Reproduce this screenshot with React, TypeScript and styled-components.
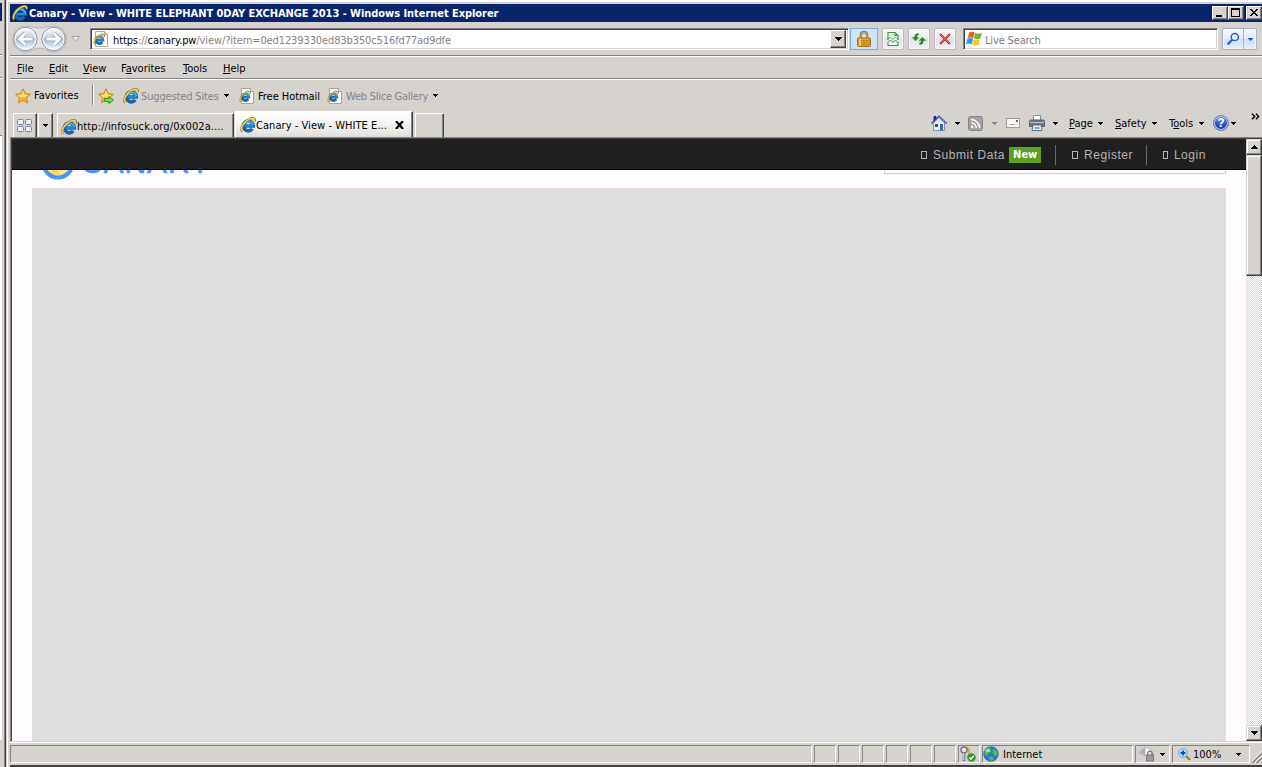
import React from "react";
import styled, { createGlobalStyle, css } from "styled-components";

const face = "#d6d3ce";
const shade = "#848284";
const dark = "#424142";

const Global = createGlobalStyle`
  *, *::before, *::after { box-sizing: border-box; }
  body { margin: 0; overflow: hidden; background: ${face}; }
`;

const Desktop = styled.div`
  display: flex;
  width: 1262px;
  height: 767px;
  background: ${face};
  font: 11px/13px "DejaVu Sans Condensed", "DejaVu Sans", sans-serif;
  color: #000;
  overflow: hidden;
`;

/* Edge of the window behind the browser */
const BackWindow = styled.div`
  display: flex;
  flex-direction: column;
  flex: none;
  width: 5px;
  border-right: 1px solid ${shade};
`;
const BackTitle = styled.div`
  width: 2px;
  height: 18px;
  margin-top: 3px;
  background: #08246b;
`;
const BackRule = styled.div<{ $top: number }>`
  width: 2px;
  height: 2px;
  margin-top: ${(p) => p.$top}px;
  background: ${shade};
  border-bottom: 1px solid #fff;
`;
const BackPage = styled.div`
  width: 2px;
  height: 605px;
  margin-top: 56px;
  background: #fff;
  border-top: 1px solid ${shade};
`;

const Window = styled.div`
  display: flex;
  flex-direction: column;
  flex: 1;
  min-width: 0;
  border-left: 1px solid ${dark};
  box-shadow: inset 1px 0 ${face}, inset 2px 0 #fff, inset 0 2px #fff, inset 0 1px ${face};
  padding: 4px 0 0 4px;
`;

const Label = styled.span<{ $w?: number; $c?: string; $ls?: number; $ml?: number }>`
  display: block;
  flex: none;
  width: ${(p) => (p.$w ? `${p.$w}px` : "auto")};
  margin-left: ${(p) => p.$ml ?? 0}px;
  color: ${(p) => p.$c ?? "#000"};
  letter-spacing: ${(p) => p.$ls ?? 0}px;
  white-space: pre;
  u { text-decoration-thickness: 1px; text-underline-offset: 1px; }
`;
const Muted = styled.span`
  color: #848284;
`;

const TitleBar = styled.div`
  display: flex;
  align-items: center;
  flex: none;
  height: 18px;
  padding-left: 2px;
  background: #08246b;
`;
const TitleText = styled(Label)`
  flex: 1;
  padding-left: 1px;
  font-weight: bold;
`;

const raised = css`
  background: ${face};
  border: 1px solid;
  border-color: #fff ${dark} ${dark} #fff;
  box-shadow: inset -1px -1px ${shade}, inset 1px 1px ${face};
`;
const CaptionButton = styled.div<{ $gap?: number }>`
  ${raised}
  display: flex;
  width: 16px;
  height: 14px;
  margin-left: ${(p) => p.$gap ?? 0}px;
`;

const NavRow = styled.div`
  display: flex;
  align-items: center;
  flex: none;
  height: 35px;
  padding: 0 5px 0 2px;
  border-bottom: 1px solid #fff;
  box-shadow: inset 0 -1px ${shade};
`;
const Field = styled.div<{ $w: number; $ml: number }>`
  display: flex;
  align-items: center;
  flex: none;
  width: ${(p) => p.$w}px;
  height: 22px;
  margin-left: ${(p) => p.$ml}px;
  background: #fff;
  border: 1px solid;
  border-color: ${shade} #fff #fff ${shade};
  box-shadow: inset 1px 1px ${dark}, inset -1px -1px ${face};
  padding: 0 2px;
`;
const FieldText = styled(Label)`
  padding-top: 2px;
`;
const DropButton = styled.div`
  ${raised}
  display: flex;
  align-items: center;
  justify-content: center;
  width: 16px;
  height: 18px;
  margin-left: auto;
`;
const LockButton = styled.div`
  display: flex;
  align-items: center;
  justify-content: center;
  width: 30px;
  height: 22px;
  margin-left: 1px;
  background: #cee3ff;
  border: 1px solid #84aad6;
`;
const ToolButton = styled.div<{ $ml: number; $w?: number }>`
  display: flex;
  align-items: center;
  justify-content: center;
  flex: none;
  width: ${(p) => p.$w ?? 22}px;
  height: 22px;
  margin-left: ${(p) => p.$ml}px;
  border: 1px solid #b9bac2;
  border-radius: 2px;
  background: linear-gradient(#f7f7f7, #ececf0 45%, #dfe0ea 50%, #eff0f7);
  box-shadow: inset 0 0 0 1px #f7f7fa;
`;
const SearchButton = styled(ToolButton)`
  border-color: #a5aecb;
  background: linear-gradient(#f4f7ff, #e4ebfb 48%, #d3def6 52%, #e7eefc);
`;
const SplitLine = styled.div`
  width: 1px;
  height: 20px;
  margin: 0 4px 0 3px;
  background: #a5aecb;
`;

const MenuRow = styled.div`
  display: flex;
  align-items: center;
  flex: none;
  height: 23px;
  padding: 1px 0 0 7px;
  border-bottom: 1px solid #fff;
  box-shadow: inset 0 -1px ${shade};
`;
const FavoritesRow = styled.div`
  display: flex;
  align-items: center;
  flex: none;
  height: 31px;
  padding-left: 5px;
`;
const LinkText = styled(Label)`
  padding-top: 1px;
`;
const VRule = styled.div`
  width: 2px;
  height: 20px;
  margin: -2px 4px 0 0;
  background: ${shade};
  border-right: 1px solid #fff;
`;

const TabRow = styled.div`
  display: flex;
  align-items: flex-end;
  flex: none;
  height: 26px;
  padding-left: 3px;
`;
const Tab = styled.div<{ $w: number; $h: number; $ml?: number; $active?: boolean }>`
  display: flex;
  align-items: center;
  flex: none;
  width: ${(p) => p.$w}px;
  height: ${(p) => p.$h}px;
  margin-left: ${(p) => p.$ml ?? 0}px;
  border: solid;
  border-width: 1px 1px 0;
  border-color: #fff ${dark} transparent #fff;
  box-shadow: inset -1px 0 ${shade};
  background: ${(p) => (p.$active ? "linear-gradient(#fff, #f7f6f5 40%, #e0deda)" : face)};
  padding: ${(p) => (p.$active ? "1px 0 0 4px" : "2px 0 0 3px")};
`;
const IconTab = styled(Tab)`
  justify-content: center;
  padding: 0 1px 0 0;
`;
const CommandBar = styled.div`
  display: flex;
  align-items: center;
  align-self: flex-start;
  height: 24px;
  margin-left: auto;
`;

const Viewport = styled.div`
  display: flex;
  flex: none;
  height: 605px;
  border-top: 1px solid ${shade};
  border-left: 1px solid ${shade};
  border-bottom: 1px solid ${face};
  box-shadow: inset 1px 1px ${dark};
  padding: 1px 0 0 1px;
`;
const Page = styled.main`
  display: flex;
  flex-direction: column;
  flex: 1;
  background: #fffbff;
`;
const SiteBar = styled.nav`
  display: flex;
  align-items: center;
  justify-content: flex-end;
  flex: none;
  height: 31px;
  padding: 1px 40px 0 0;
  background: #212021;
  border-bottom: 1px solid #000;
  color: #b5b2b5;
  font: 12px/16px "Liberation Sans", Arial, sans-serif;
  letter-spacing: 0.55px;
`;
const SiteLink = styled.span<{ $w: number }>`
  display: flex;
  align-items: center;
  width: ${(p) => p.$w}px;
  white-space: nowrap;
`;
const MissingGlyph = styled.i`
  width: 6px;
  height: 8px;
  margin-right: 6px;
  border: 1px solid #b5b2b5;
`;
const NewBadge = styled.b`
  height: 16px;
  margin-left: 4px;
  padding: 0 4px;
  background: #5aa221;
  color: #fff;
  font: bold 11px/16px "DejaVu Sans Condensed", sans-serif;
  letter-spacing: 0;
`;
const SiteDivider = styled.i<{ $mr: number }>`
  width: 1px;
  height: 20px;
  margin-right: ${(p) => p.$mr}px;
  background: #6b696b;
`;
const Masthead = styled.header`
  display: flex;
  align-items: flex-start;
  flex: none;
  height: 18px;
  padding: 0 20px 0 29px;
  overflow: hidden;
`;
const LogoText = styled.span`
  margin: -22px 0 0 6px;
  color: #4296f7;
  font: 30px/30px "Liberation Sans", Arial, sans-serif;
  letter-spacing: 0.9px;
  -webkit-text-stroke: 0.6px #4296f7;
`;
const SearchBoxEdge = styled.div`
  width: 342px;
  height: 4px;
  margin-left: auto;
  border: 1px solid #ceccce;
  border-top: 0;
  background: #fff;
`;
const GreyPanel = styled.section`
  flex: 1;
  margin: 0 20px;
  background: #dedfde;
`;

const ScrollTrack = styled.div`
  display: flex;
  flex-direction: column;
  flex: none;
  width: 16px;
  background: repeating-conic-gradient(#fff 0 25%, ${face} 0 50%) 0 0 / 2px 2px;
`;
const ScrollPart = styled.div<{ $h: number; $end?: boolean }>`
  ${raised}
  display: flex;
  align-items: center;
  justify-content: center;
  flex: none;
  height: ${(p) => p.$h}px;
  margin-top: ${(p) => (p.$end ? "auto" : "0")};
  border-color: ${face} ${dark} ${dark} ${face};
  box-shadow: inset -1px -1px ${shade}, inset 1px 1px #fff;
`;

const StatusBar = styled.footer`
  display: flex;
  flex: none;
  height: 25px;
  padding: 2px 0 3px;
  border-top: 1px solid #fff;
  border-bottom: 2px solid ${dark};
`;
const StatusCell = styled.div<{ $w: number; $pl?: number }>`
  display: flex;
  align-items: center;
  flex: none;
  width: ${(p) => p.$w}px;
  height: 18px;
  margin-right: 2px;
  border: 1px solid;
  border-color: ${shade} #fff #fff ${shade};
  padding-left: ${(p) => p.$pl ?? 0}px;
`;

const Glyph = styled.svg<{ $ml?: number; $mr?: number; $up?: number }>`
  display: block;
  flex: none;
  margin-left: ${(p) => p.$ml ?? 0}px;
  margin-right: ${(p) => p.$mr ?? 0}px;
  margin-bottom: ${(p) => p.$up ?? 0}px;
`;
const LogoRing = styled(Glyph)`
  margin-top: -24px;
`;
type G = { ml?: number; mr?: number };

const Arrow = ({ ml, mr, c = "#000", up, w = 5 }: G & { c?: string; up?: boolean; w?: number }) => {
  const h = Math.ceil(w / 2);
  return (
    <Glyph $ml={ml} $mr={mr} width={w} height={h} viewBox={`0 0 ${w} ${h}`} shapeRendering="crispEdges">
      {Array.from({ length: h }, (_, i) => (
        <rect key={i} x={i} y={up ? h - 1 - i : i} width={w - 2 * i} height="1" fill={c} />
      ))}
    </Glyph>
  );
};

const EShape = () => (
  <>
    <path d="M4 9H13.2A4.9 4.9 0 1 0 12.2 11.9" fill="none" stroke="#1665b0" strokeWidth="3.7" />
    <path d="M3.8 7.4A4.9 4.9 0 0 1 13.2 8.2" fill="none" stroke="#3fb0ee" strokeWidth="2" />
    <path d="M5 9H13.8" stroke="#2b8fd8" strokeWidth="1.6" />
    <path d="M2.2 14.6C-.6 11.8 3.6 5.2 8.6 2.4C12 .5 15.6.4 14.8 4.4" fill="none" stroke="#a97a14" strokeWidth="2.2" />
    <path d="M2 14C0 11.2 3.8 5.2 8.6 2.5C11.8.9 14.9.6 14.3 3.8" fill="none" stroke="#ffd84e" strokeWidth="1.3" />
  </>
);
const IEIcon = ({ ml, mr }: G) => (
  <Glyph $ml={ml} $mr={mr} width="16" height="16" viewBox="0 0 16 16"><EShape /></Glyph>
);
const IEPage = ({ ml, mr }: G) => (
  <Glyph $ml={ml} $mr={mr} width="16" height="16" viewBox="0 0 16 16">
    <path d="M2.5 .5H11.5L14.5 3.5V15.5H2.5Z" fill="#fff" stroke="#a5a6ad" />
    <path d="M11.5 .5V3.5H14.5" fill="#e7e7ef" stroke="#a5a6ad" />
    <g transform="translate(.4 2.6) scale(.72)"><EShape /></g>
  </Glyph>
);
const starPath = "M8 .8L10.2 5.6L15.4 6.2L11.5 9.7L12.6 14.9L8 12.2L3.4 14.9L4.5 9.7L.6 6.2L5.8 5.6Z";
const Star = ({ add }: { add?: boolean }) => (
  <Glyph $mr={add ? 9 : 3} width="16" height="16" viewBox="0 0 16 16">
    <path d={starPath} fill="#ffb31f" stroke="#cf7d0a" strokeWidth=".9" />
    <path d="M8 2.5L9.6 6.4L13.4 7L10.6 9.2L8 8.8L5 9.4L2.8 7L6.4 6.4Z" fill="#ffe27a" />
    {add && <path d="M6.5 10.6H10.8V8.6L15.5 12L10.8 15.4V13.4H6.5Z" fill="#7be352" stroke="#189218" strokeWidth=".9" />}
  </Glyph>
);

const BackForward = () => (
  <Glyph width="56" height="28" viewBox="0 0 56 28">
    <defs>
      <linearGradient id="orb" x1="0" y1="0" x2="0" y2="1">
        <stop offset="0" stopColor="#fafbfd" />
        <stop offset=".42" stopColor="#ccd3df" />
        <stop offset=".52" stopColor="#acb8ca" />
        <stop offset=".8" stopColor="#d5e4f1" />
        <stop offset="1" stopColor="#f4fbff" />
      </linearGradient>
    </defs>
    <path d="M13.5 1C19 1 22 3 27.5 3S36 1 41.5 1A13 13 0 0 1 41.5 27C36 27 33 23 27.5 23S19 27 13.5 27A13 13 0 0 1 13.5 1Z" fill="#e4e3e3" stroke="#b5b4b5" />
    {[13.5, 41.5].map((x) => (
      <g key={x}>
        <circle cx={x} cy="14" r="11.6" fill="url(#orb)" stroke="#808a9a" />
        <circle cx={x} cy="14" r="10.4" fill="none" stroke="#fff" strokeWidth="1.4" opacity=".75" />
      </g>
    ))}
    <path d="M20.5 14H8M13 8.5L7.5 14L13 19.5" fill="none" stroke="#8e9bb0" strokeWidth="4.2" />
    <path d="M20.5 14H8M13 8.5L7.5 14L13 19.5" fill="none" stroke="#fff" strokeWidth="2.8" />
    <path d="M34.5 14H47M42 8.5L47.5 14L42 19.5" fill="none" stroke="#8e9bb0" strokeWidth="4.2" />
    <path d="M34.5 14H47M42 8.5L47.5 14L42 19.5" fill="none" stroke="#fff" strokeWidth="2.8" />
  </Glyph>
);
const Padlock = () => (
  <Glyph width="14" height="16" viewBox="0 0 14 16">
    <path d="M3.8 8V4.5Q3.8 1.3 7 1.3T10.2 4.5V8" fill="none" stroke="#8c6d31" strokeWidth="2.4" />
    <path d="M3.8 8V4.5Q3.8 1.3 7 1.3T10.2 4.5V8" fill="none" stroke="#dec78c" strokeWidth=".9" />
    <rect x=".5" y="7" width="13" height="8.5" rx=".8" fill="#e7a629" stroke="#a56d10" />
    <path d="M1 9.5H13M1 11.5H13M1 13.5H13" stroke="#bd7d18" strokeWidth=".9" />
    <path d="M3 8V15" stroke="#ffdb73" strokeWidth="1.5" />
  </Glyph>
);
const BrokenPage = () => (
  <Glyph width="14" height="16" viewBox="0 0 14 16" fill="none" stroke="#319a39">
    <path d="M2 9V1.5H9L12 4.5V9M9 1.5V4.5H12M2 12V14.5H12V12" fill="#f7fff7" strokeWidth="1.1" />
    <path d="M1.5 8.5L4.5 6L7 8.5L9.5 6L12.5 9M1.5 11.5L4.5 9L7 11.5L9.5 9L12.5 12" strokeWidth=".9" />
  </Glyph>
);
const Refresh = () => (
  <Glyph width="16" height="16" viewBox="0 0 16 16" fill="#219221">
    <path d="M7.6 2V4.2Q5.8 4.4 5.8 6.2H8.4L4.6 10L.8 6.2H3.4Q3.4 2.4 7.6 2Z" />
    <path d="M8.4 14V11.8Q10.2 11.6 10.2 9.8H7.6L11.4 6L15.2 9.8H12.6Q12.6 13.6 8.4 14Z" />
  </Glyph>
);
const Stop = () => (
  <Glyph width="14" height="14" viewBox="0 0 14 14">
    <path d="M2 2L12 12M12 2L2 12" stroke="#bd3431" strokeWidth="2.3" />
    <path d="M2.5 2.5L11.5 11.5M11.5 2.5L2.5 11.5" stroke="#de716b" strokeWidth=".8" />
  </Glyph>
);
const WinFlag = () => (
  <Glyph width="16" height="16" viewBox="0 0 16 16">
    <path d="M3.2 1.6Q6 -.1 8.6 1.6L7.3 7.2Q4.6 5.7 1.6 7.2Z" fill="#ef5a29" />
    <path d="M9.2 2.1Q12 3.4 15.9 1.8L14.3 7.6Q11 9.1 7.9 7.6Z" fill="#73b531" />
    <path d="M1.4 7.8Q4.5 6.3 7.1 7.8L5.6 13.4Q3 11.7 0 13.4Z" fill="#3992e7" />
    <path d="M7.7 8.3Q10.5 9.8 14 8.3L12.4 14Q9 15.4 6.2 13.9Z" fill="#ffc621" />
  </Glyph>
);
const Magnifier = () => (
  <Glyph width="14" height="14" viewBox="0 0 14 14" fill="none">
    <path d="M1.5 12.5L6.5 7.5" stroke="#2961ce" strokeWidth="2.3" />
    <circle cx="8.8" cy="5" r="3.6" fill="#e7f3ff" stroke="#2965d6" strokeWidth="1.5" />
  </Glyph>
);
const QuickTabs = () => (
  <Glyph width="16" height="14" viewBox="0 0 16 14" fill="#eff0fa" stroke="#7b82a5">
    <rect x=".5" y=".5" width="6" height="5" rx="1" /><rect x="8.5" y=".5" width="6" height="5" rx="1" />
    <rect x=".5" y="7.5" width="6" height="5" rx="1" /><rect x="8.5" y="7.5" width="6" height="5" rx="1" />
  </Glyph>
);
const Home = () => (
  <Glyph $mr={8} width="16" height="17" viewBox="0 0 16 17">
    <path d="M2.5 8L8 2.5L13.5 8V15.5H2.5Z" fill="#e7efff" stroke="#8490bd" />
    <path d="M3 6V1.5H5V4" fill="#1820a5" stroke="#1820a5" />
    <path d="M.5 8.5L8 1.3L15.5 8.5" fill="none" stroke="#2939bd" strokeWidth="1.6" strokeDasharray="1.8 .6" />
    <rect x="9" y="9" width="3" height="6.5" fill="#316db5" /><rect x="4" y="9" width="3" height="3" fill="#424a5a" />
  </Glyph>
);
const Feed = () => (
  <Glyph $mr={9} width="15" height="15" viewBox="0 0 15 15">
    <rect x=".5" y=".5" width="14" height="14" rx="2" fill="#a5a2a5" stroke="#848284" />
    <circle cx="4.2" cy="10.8" r="1.3" fill="#fff" />
    <path d="M3 6.7A5.3 5.3 0 0 1 8.3 12M3 3.4A8.6 8.6 0 0 1 11.6 12" fill="none" stroke="#fff" strokeWidth="1.5" />
  </Glyph>
);
const Mail = () => (
  <Glyph $mr={9} width="14" height="10" viewBox="0 0 14 10">
    <rect x=".5" y=".5" width="13" height="9" fill="#f7f7f7" stroke="#9c9aa5" />
    <rect x="10" y="2" width="2" height="2" fill="#d63131" /><path d="M4 6.5H9" stroke="#a5a6ad" />
  </Glyph>
);
const Printer = () => (
  <Glyph $mr={8} width="16" height="16" viewBox="0 0 16 16">
    <path d="M4.5 6V.5H11.5V6" fill="#fff" stroke="#848a94" />
    <path d="M.5 6.5Q.5 5 2 5H14Q15.5 5 15.5 6.5V11.5H.5Z" fill="#737984" stroke="#5a5d63" />
    <path d="M1 7.5H15" stroke="#bdc3ce" />
    <path d="M4 10H12L13 15.5H3Z" fill="#e7f3ff" stroke="#63717b" /><path d="M5.5 13H10.5" stroke="#4296c6" strokeWidth="1.5" />
  </Glyph>
);
const HelpOrb = styled.span`
  display: flex;
  align-items: center;
  justify-content: center;
  width: 16px;
  height: 16px;
  border: 1px solid #6b7dad;
  border-radius: 50%;
  background: radial-gradient(circle at 50% 20%, #6f92e0, #2149b5 60%, #10349c);
  box-shadow: inset 0 0 0 1px #cedbf7;
  color: #fff;
  font: bold 12px/14px "Liberation Sans", sans-serif;
`;
const RingLogo = () => (
  <LogoRing width="34" height="34" viewBox="0 0 34 34">
    <circle cx="17" cy="17" r="14.5" fill="#ffe794" stroke="#4296f7" strokeWidth="4" />
    <path d="M8 27L14 22L20 29Z" fill="#ffc642" opacity=".7" />
  </LogoRing>
);
const Keys = () => (
  <Glyph width="17" height="16" viewBox="0 0 17 16">
    <path d="M8 1.5Q12 5 9.5 11" fill="none" stroke="#dea629" strokeWidth="2" />
    <circle cx="5" cy="4" r="3" fill="#e7e7ef" stroke="#737584" strokeWidth="1.5" />
    <path d="M5 7V15M6.5 11H5" stroke="#737584" strokeWidth="2.6" /><path d="M4.8 7V14" stroke="#dedfe7" />
    <circle cx="12.5" cy="11.5" r="4.2" fill="#299629" /><path d="M10.3 11.5L12 13.2L14.8 9.8" fill="none" stroke="#fff" strokeWidth="1.5" />
  </Glyph>
);
const Globe = () => (
  <Glyph $mr={4} width="16" height="16" viewBox="0 0 16 16">
    <circle cx="8" cy="8" r="7.3" fill="#2979ce" stroke="#295a9c" strokeWidth=".8" />
    <path d="M2 4Q5 .5 8 1.5L7 4L8 6L4.5 8L5 10.5L2.5 9Q.5 7 2 4ZM10 3Q13 3 14.5 6V9L12 10L9.5 7ZM6 11L9 10.5L11 13Q9 15.5 7 14.5Z" fill="#4ac342" />
    <ellipse cx="5" cy="4.5" rx="2.5" ry="1.6" fill="#c6f3ff" opacity=".7" />
  </Glyph>
);
const Protected = () => (
  <Glyph $mr={5} width="16" height="16" viewBox="0 0 16 16">
    <path d="M0 8Q1 3 6 1.5V11Q3 7 0 8Z" fill="#b5b2b5" />
    <path d="M6 1.5Q10 1.5 12 5V9H6Z" fill="#fff" stroke="#adaaad" strokeWidth=".8" />
    <path d="M8.8 9V7Q8.8 5.2 11 5.2T13.2 7V9" fill="none" stroke="#848284" strokeWidth="1.5" />
    <rect x="7.5" y="9" width="7" height="6" fill="#9c9a9c" stroke="#7b797b" />
  </Glyph>
);
const Zoom = () => (
  <Glyph $mr={2} width="13" height="13" viewBox="0 0 13 13">
    <path d="M8 8L12 12" stroke="#b57918" strokeWidth="2.4" />
    <circle cx="5" cy="5" r="4.3" fill="#bde3ff" stroke="#63a2de" />
    <path d="M5 2.5V7.5M2.5 5H7.5" stroke="#0851b5" strokeWidth="1.8" />
  </Glyph>
);
const Grip = () => (
  <Glyph width="13" height="18" viewBox="0 0 13 18">
    <path d="M0 18L13 5M4.5 18L13 9.5M9 18L13 14" stroke="#848284" strokeWidth="1.8" />
    <path d="M-1.5 18L13 3.5M3 18L13 8M7.5 18L13 12.5" stroke="#fff" />
  </Glyph>
);

const Caption = ({ d, gap }: { d: string; gap?: number }) => (
  <CaptionButton $gap={gap}>
    <Glyph width="14" height="12" viewBox="0 0 14 12" shapeRendering="crispEdges">
      <path d={d} fill="#000" fillRule="evenodd" />
    </Glyph>
  </CaptionButton>
);

const menus: [string, string, string, number][] = [
  ["", "F", "ile", 32], ["", "E", "dit", 34], ["", "V", "iew", 38],
  ["F", "a", "vorites", 62], ["", "T", "ools", 40], ["", "H", "elp", 40],
];

export default function App() {
  return (
    <Desktop>
      <Global />
      <BackWindow>
        <BackTitle />
        <BackRule $top={33} />
        <BackRule $top={21} />
        <BackPage />
      </BackWindow>
      <Window>
        <TitleBar>
          <IEIcon />
          <TitleText $c="#fff" $ls={-0.05}>Canary - View - WHITE ELEPHANT 0DAY EXCHANGE 2013 - Windows Internet Explorer</TitleText>
          <Caption d="M3 8H9V10H3Z" />
          <Caption d="M2 1H11V10H2ZM3 3H10V9H3Z" />
          <Caption gap={2} d="M3 2H5V3H6V4H8V3H9V2H11V3H10V4H9V5H8V6H9V7H10V8H11V9H9V8H8V7H6V8H5V9H3V8H4V7H5V6H6V5H5V4H4V3H3Z" />
        </TitleBar>
        <NavRow>
          <BackForward />
          <Glyph $ml={3} width="9" height="6" viewBox="0 0 9 6"><path d="M.5 .5H8.5L4.5 5Z" fill="#efefef" stroke="#a5a2a5" /></Glyph>
          <Field $w={759} $ml={10}>
            <IEPage mr={4} />
            <FieldText $ls={-0.11}>https<Muted>://</Muted>canary.pw<Muted>/view/?item=0ed1239330ed83b350c516fd77ad9dfe</Muted></FieldText>
            <DropButton><Arrow w={7} /></DropButton>
          </Field>
          <LockButton><Padlock /></LockButton>
          <ToolButton $ml={4}><BrokenPage /></ToolButton>
          <ToolButton $ml={4}><Refresh /></ToolButton>
          <ToolButton $ml={4}><Stop /></ToolButton>
          <Field $w={255} $ml={7}>
            <WinFlag />
            <FieldText $c="#7b797b" $ml={3} $ls={-0.15}>Live Search</FieldText>
          </Field>
          <SearchButton $ml={4} $w={35}>
            <Magnifier /><SplitLine /><Arrow c="#2159c6" />
          </SearchButton>
        </NavRow>
        <MenuRow>
          {menus.map(([a, u, b, w]) => (
            <Label key={u} $w={w}>{a}<u>{u}</u>{b}</Label>
          ))}
        </MenuRow>
        <FavoritesRow>
          <Star />
          <Label $w={58}>Favorites</Label>
          <VRule />
          <Star add />
          <IEIcon mr={2} />
          <LinkText $w={83} $c="#848284" $ls={-0.15}>Suggested Sites</LinkText>
          <Arrow mr={10} />
          <IEPage mr={3} />
          <LinkText $w={68} $ls={-0.05}>Free Hotmail</LinkText>
          <IEPage ml={1} mr={3} />
          <LinkText $w={87} $c="#848284" $ls={-0.25}>Web Slice Gallery</LinkText>
          <Arrow />
        </FavoritesRow>
        <TabRow>
          <IconTab $w={24} $h={24}><QuickTabs /></IconTab>
          <IconTab $w={15} $h={24} $ml={1}><Arrow /></IconTab>
          <Tab $w={177} $h={24} $ml={4}>
            <IEIcon mr={0} />
            <Label $ls={0.1}>http://infosuck.org/0x002a....</Label>
          </Tab>
          <Tab $w={178} $h={26} $ml={1} $active>
            <IEIcon mr={0} />
            <Label $w={139} $ls={0.05}>Canary - View - WHITE E...</Label>
            <Glyph width="9" height="8" viewBox="0 0 9 8"><path d="M1 0L8 8M8 0L1 8" stroke="#000" strokeWidth="2.2" /></Glyph>
          </Tab>
          <Tab $w={29} $h={24} $ml={2} />
          <CommandBar>
            <Home /><Arrow mr={8} />
            <Feed /><Arrow mr={9} c="#848284" />
            <Mail />
            <Printer /><Arrow mr={11} />
            <Label $w={29}><u>P</u>age</Label><Arrow mr={12} />
            <Label $w={37}><u>S</u>afety</Label><Arrow mr={12} />
            <Label $w={30}>T<u>o</u>ols</Label><Arrow mr={9} />
            <HelpOrb>?</HelpOrb><Arrow ml={2} mr={15} />
            <Glyph $mr={2} $up={13} width="9" height="7" viewBox="0 0 9 7"><path d="M1 .8L3.7 3.5L1 6.2M5 .8L7.7 3.5L5 6.2" fill="none" stroke="#000" strokeWidth="1.4" /></Glyph>
          </CommandBar>
        </TabRow>
        <Viewport>
          <Page>
            <SiteBar>
              <SiteLink $w={134}><MissingGlyph />Submit Data<NewBadge>New</NewBadge></SiteLink>
              <SiteDivider $mr={16} />
              <SiteLink $w={74}><MissingGlyph />Register</SiteLink>
              <SiteDivider $mr={16} />
              <SiteLink $w={43}><MissingGlyph />Login</SiteLink>
            </SiteBar>
            <Masthead>
              <RingLogo />
              <LogoText>CANARY</LogoText>
              <SearchBoxEdge />
            </Masthead>
            <GreyPanel />
          </Page>
          <ScrollTrack>
            <ScrollPart $h={16}><Arrow up w={7} /></ScrollPart>
            <ScrollPart $h={121} />
            <ScrollPart $h={16} $end><Arrow w={7} /></ScrollPart>
          </ScrollTrack>
        </Viewport>
        <StatusBar>
          <StatusCell $w={802} />
          {[0, 1, 2, 3, 4, 5].map((i) => <StatusCell key={i} $w={22} />)}
          <StatusCell $w={22}><Keys /></StatusCell>
          <StatusCell $w={151}><Globe /><Label>Internet</Label></StatusCell>
          <StatusCell $w={35} $pl={3}><Protected /><Arrow /></StatusCell>
          <StatusCell $w={78} $pl={5}><Zoom /><Label $w={43}>100%</Label><Arrow /></StatusCell>
          <Grip />
        </StatusBar>
      </Window>
    </Desktop>
  );
}
